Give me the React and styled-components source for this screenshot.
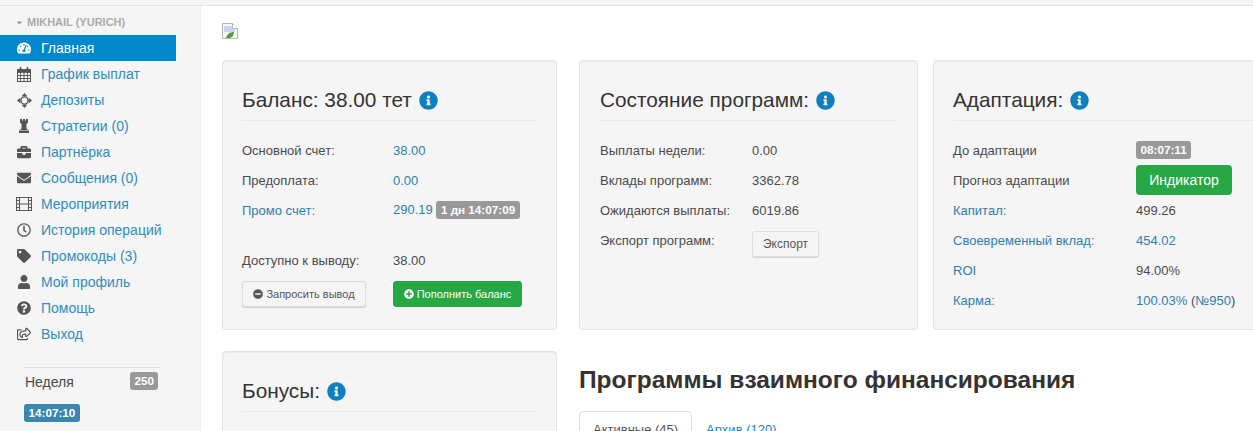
import React from "react";
import styled, { createGlobalStyle } from "styled-components";
import {
  FaTachometerAlt,
  FaRegClock,
  FaBriefcase,
  FaEnvelope,
  FaTag,
  FaUser,
  FaQuestionCircle,
  FaInfoCircle,
  FaMinusCircle,
  FaPlusCircle,
  FaCaretDown,
  FaRegShareSquare,
} from "react-icons/fa";

const GlobalStyle = createGlobalStyle`
  html, body {
    margin: 0;
    padding: 0;
    background: #fff;
    overflow: hidden;
  }
  body {
    font-family: "Liberation Sans", Arial, sans-serif;
    font-size: 13px;
    color: #4a4a4a;
  }
  * { box-sizing: border-box; }
`;

const CalendarIcon = () => (
  <svg width="14" height="15" viewBox="0 0 14 15" fill="none" stroke="currentColor">
    <rect x=".5" y="2.5" width="13" height="12" />
    <path d="M.5 5.5h13M.5 8.5h13M.5 11.5h13M3.5 5.5v9M7 5.5v9M10.5 5.5v9" strokeWidth=".9" />
    <path d="M3.5 0v3.5M10.5 0v3.5" strokeWidth="1.6" />
    <path d="M1 3h12v2H1z" fill="currentColor" stroke="none" />
  </svg>
);

const MoveIcon = () => (
  <svg width="15" height="15" viewBox="0 0 15 15">
    <circle cx="7.5" cy="7.5" r="3.6" fill="none" stroke="currentColor" strokeWidth="1.4" />
    <path d="M7.5 0l2.8 3.2H4.700zM7.500 15l2.800-3.200H4.700zM0 7.500l3.200-2.800v5.600zM15 7.500l-3.200-2.800v5.600z" fill="currentColor" />
  </svg>
);

const RookIcon = () => (
  <svg width="12" height="14" viewBox="0 0 12 14" fill="currentColor">
    <path d="M2 0h2v1.500h1V0h2v1.500h1V0h2v3.500L8.500 5v4.500L10 11H2l1.500-1.500V5L2 3.500z" />
    <path d="M1 11.500h10V14H1z" />
  </svg>
);

const FilmIcon = () => (
  <svg width="16" height="14" viewBox="0 0 16 14" fill="none" stroke="currentColor">
    <rect x=".5" y=".5" width="15" height="13" />
    <path d="M3.500.5v13M12.500.5v13M3.500 7h9M.5 3.500h3M.5 7h3M.5 10.500h3M12.500 3.500h3M12.500 7h3M12.500 10.500h3" />
  </svg>
);

const menu = [
  { icon: <FaTachometerAlt />, label: "Главная", active: true },
  { icon: <CalendarIcon />, label: "График выплат" },
  { icon: <MoveIcon />, label: "Депозиты" },
  { icon: <RookIcon />, label: "Стратегии (0)" },
  { icon: <FaBriefcase />, label: "Партнёрка" },
  { icon: <FaEnvelope />, label: "Сообщения (0)" },
  { icon: <FilmIcon />, label: "Мероприятия" },
  { icon: <FaRegClock />, label: "История операций" },
  { icon: <FaTag />, label: "Промокоды (3)" },
  { icon: <FaUser />, label: "Мой профиль" },
  { icon: <FaQuestionCircle />, label: "Помощь" },
  { icon: <FaRegShareSquare />, label: "Выход" },
];

const App = () => {
  return (
    <Page>
      <GlobalStyle />
      <TopBar />
      <Body>
        <Sidebar>
          <UserName>
            <FaCaretDown size={9} />
            MIKHAIL (YURICH)
          </UserName>
          <Menu>
            {menu.map(({ icon, label, active }) => (
              <MenuItem key={label} $active={active}>
                <MenuIcon $active={active}>{icon}</MenuIcon>
                {label}
              </MenuItem>
            ))}
          </Menu>
          <WeekBox>
            <WeekRow>
              Неделя
              <Badge $square>250</Badge>
            </WeekRow>
            <Badge $blue>14:07:10</Badge>
          </WeekBox>
        </Sidebar>

        <Main>
          <BrokenImage viewBox="0 0 16 16">
            <path d="M.5.5h10l5 5v10H.5z" fill="#f7f7f7" stroke="#b5b5b5" />
            <path d="M10.5.5v5h5" fill="#fff" stroke="#b5b5b5" />
            <path d="M2 3h8v3h3v3H2z" fill="#c5d6ee" />
            <path d="M4 15c1-4 4-6 8-6l-1 4-3 2z" fill="#4f9e3a" />
          </BrokenImage>

          <Cards>
            <Card>
              <CardTitle>
                Баланс: 38.00 тет <InfoIcon />
              </CardTitle>
              <Row $label={151}>
                <span>Основной счет:</span>
                <Link>38.00</Link>
              </Row>
              <Row $label={151}>
                <span>Предоплата:</span>
                <Link>0.00</Link>
              </Row>
              <Row $label={151}>
                <Link>Промо счет:</Link>
                <span>
                  <Link>290.19</Link> <Badge>1 дн 14:07:09</Badge>
                </span>
              </Row>
              <Spacer />
              <Row $label={151}>
                <span>Доступно к выводу:</span>
                <span>38.00</span>
              </Row>
              <Actions>
                <SmallButton>
                  <FaMinusCircle size={10} /> Запросить вывод
                </SmallButton>
                <SmallButton $green>
                  <FaPlusCircle size={10} /> Пополнить баланс
                </SmallButton>
              </Actions>
            </Card>

            <Card $inset={20}>
              <CardTitle>
                Состояние программ: <InfoIcon />
              </CardTitle>
              <Row $label={152}>
                <span>Выплаты недели:</span>
                <span>0.00</span>
              </Row>
              <Row $label={152}>
                <span>Вклады программ:</span>
                <span>3362.78</span>
              </Row>
              <Row $label={152}>
                <span>Ожидаются выплаты:</span>
                <span>6019.86</span>
              </Row>
              <Row $label={152}>
                <span>Экспорт программ:</span>
                <ExportButton>Экспорт</ExportButton>
              </Row>
            </Card>

            <Card>
              <CardTitle>
                Адаптация: <InfoIcon />
              </CardTitle>
              <Row $label={183}>
                <span>До адаптации</span>
                <Badge>08:07:11</Badge>
              </Row>
              <Row $label={183}>
                <span>Прогноз адаптации</span>
                <IndicatorButton>Индикатор</IndicatorButton>
              </Row>
              <Row $label={183}>
                <Link>Капитал:</Link>
                <span>499.26</span>
              </Row>
              <Row $label={183}>
                <Link>Своевременный вклад:</Link>
                <Link>454.02</Link>
              </Row>
              <Row $label={183}>
                <Link>ROI</Link>
                <span>94.00%</span>
              </Row>
              <Row $label={183}>
                <Link>Карма:</Link>
                <span>
                  <Link>100.03%</Link> (<Link>№950</Link>)
                </span>
              </Row>
            </Card>

            <Card $short>
              <CardTitle>
                Бонусы: <InfoIcon />
              </CardTitle>
            </Card>

            <Programs>
              <ProgramsTitle>Программы взаимного финансирования</ProgramsTitle>
              <Tabs>
                <Tab $active>Активные (45)</Tab>
                <Tab>Архив (120)</Tab>
              </Tabs>
            </Programs>
          </Cards>
        </Main>
      </Body>
    </Page>
  );
};

export default App;

const InfoIcon = () => (
  <InfoGlyph>
    <FaInfoCircle />
  </InfoGlyph>
);

const Page = styled.div`
  width: 1253px;
  height: 431px;
  overflow: hidden;
`;

const TopBar = styled.div`
  height: 6px;
  background: #f5f5f5;
  border-bottom: 1px solid #e3e3e3;
`;

const Body = styled.div`
  display: flex;
  height: 425px;
`;

const Sidebar = styled.aside`
  width: 201px;
  flex-shrink: 0;
  background: #f5f5f5;
  border-right: 1px solid #eee;
  padding-top: 9px;
`;

const UserName = styled.div`
  display: flex;
  align-items: center;
  gap: 3px;
  height: 14px;
  padding-left: 15px;
  font-size: 11px;
  font-weight: bold;
  color: #aaa;
  svg {
    color: #999;
  }
`;

const Menu = styled.nav`
  width: 176px;
  margin-top: 6px;
`;

const MenuItem = styled.a`
  display: flex;
  align-items: center;
  height: 26px;
  font-size: 14px;
  color: ${({ $active }) => ($active ? "#fff" : "#2f8cbd")};
  background: ${({ $active }) => ($active ? "#0088cc" : "transparent")};
`;

const MenuIcon = styled.span`
  display: flex;
  justify-content: center;
  width: 16px;
  margin: 0 9px 0 16px;
  font-size: 14px;
  color: ${({ $active }) => ($active ? "#fff" : "#555")};
`;

const WeekBox = styled.div`
  width: 136px;
  margin: 20px 0 0 24px;
  border-top: 1px solid #ddd;
  padding-top: 4px;
`;

const WeekRow = styled.div`
  display: flex;
  justify-content: space-between;
  align-items: flex-end;
  height: 18px;
  margin: 0 2px 14px 1px;
  font-size: 14px;
`;

const Badge = styled.span`
  display: inline-block;
  justify-self: start;
  padding: ${({ $square }) => ($square ? "3px 4px" : "3px 4.5px")};
  border-radius: 3px;
  font-size: 11.7px;
  line-height: 12px;
  font-weight: bold;
  white-space: nowrap;
  color: #fff;
  background: ${({ $blue }) => ($blue ? "#3a87ad" : "#999")};
`;

const Main = styled.main`
  flex: 1;
  min-width: 0;
  padding: 17px 0 0 21px;
`;

const BrokenImage = styled.svg`
  display: block;
  width: 16px;
  height: 16px;
`;

const Cards = styled.div`
  display: grid;
  grid-template-columns: 335px 339px 340px;
  grid-template-rows: 270px auto;
  column-gap: 22px;
  row-gap: 21px;
  margin-top: 21px;
  width: 1060px;
  & > :nth-child(3) {
    margin-left: -7px;
  }
`;

const Card = styled.section`
  height: ${({ $short }) => ($short ? "120px" : "270px")};
  padding: 0 20px 0 ${({ $inset }) => $inset ?? 19}px;
  background: #f5f5f5;
  border: 1px solid #e3e3e3;
  border-radius: 4px;
  box-shadow: inset 0 1px 1px rgba(0, 0, 0, 0.05);
`;

const CardTitle = styled.h3`
  display: flex;
  align-items: center;
  gap: 7px;
  height: 60px;
  margin: 0 0 14px;
  padding-top: 19px;
  font-size: 20.8px;
  font-weight: normal;
  color: #333;
  border-bottom: 1px solid #e9e9e9;
`;

const InfoGlyph = styled.span`
  display: flex;
  font-size: 19px;
  color: #0f7fbf;
`;

const Row = styled.div`
  display: grid;
  grid-template-columns: ${({ $label }) => $label}px auto;
  align-items: center;
  height: 30px;
  white-space: nowrap;
`;

const Link = styled.a`
  color: #2d7fb0;
`;

const Spacer = styled.div`
  height: 20px;
`;

const Actions = styled.div`
  display: grid;
  grid-template-columns: 151px auto;
  margin-top: 6px;
`;

const SmallButton = styled.button`
  display: flex;
  align-items: center;
  justify-content: center;
  gap: 3px;
  width: ${({ $green }) => ($green ? "129px" : "124px")};
  height: 26px;
  padding: 0;
  font-family: inherit;
  font-size: 11px;
  color: ${({ $green }) => ($green ? "#fff" : "#555")};
  background: ${({ $green }) => ($green ? "#28a745" : "#f5f5f5")};
  border: 1px solid ${({ $green }) => ($green ? "#28a745" : "#ddd")};
  border-radius: 3px;
  box-shadow: ${({ $green }) => ($green ? "none" : "0 1px 1px rgba(0,0,0,.15)")};
`;

const ExportButton = styled.button`
  justify-self: start;
  width: 67px;
  height: 26px;
  margin: 4px 0 -4px;
  padding: 0;
  font-family: inherit;
  font-size: 12px;
  color: #555;
  background: #f5f5f5;
  border: 1px solid #ddd;
  border-radius: 3px;
  box-shadow: 0 1px 1px rgba(0, 0, 0, 0.15);
`;

const IndicatorButton = styled.button`
  justify-self: start;
  width: 96px;
  height: 30px;
  padding: 0;
  font-family: inherit;
  font-size: 14px;
  color: #fff;
  background: #28a745;
  border: none;
  border-radius: 4px;
`;

const Programs = styled.div`
  min-width: 0;
  grid-column: 2 / 4;
`;

const ProgramsTitle = styled.h2`
  margin: 15px 0 0;
  font-size: 24.5px;
  line-height: 28px;
  font-weight: bold;
  color: #333;
`;

const Tabs = styled.div`
  display: flex;
  margin-top: 17px;
`;

const Tab = styled.a`
  height: 40px;
  padding: 10px 13px;
  font-size: 13px;
  color: ${({ $active }) => ($active ? "#555" : "#2d7fb0")};
  border: 1px solid ${({ $active }) => ($active ? "#ddd" : "transparent")};
  border-radius: 4px 4px 0 0;
`;
